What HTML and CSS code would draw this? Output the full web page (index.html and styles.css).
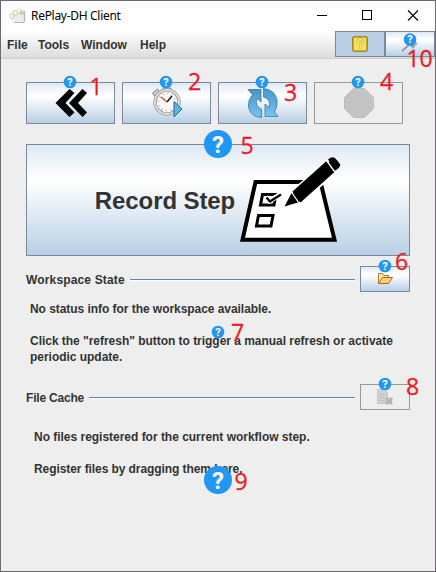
FILE: index.html
```html
<!DOCTYPE html>
<html lang="en">
<head>
<meta charset="utf-8">
<title>RePlay-DH Client</title>
<link rel="stylesheet" href="styles.css">
</head>
<body>
<div class="window">
  <header class="titlebar">
    <svg class="app-icon" width="17" height="16" viewBox="0 0 17 16"><path d="M3 14Q1 11 4 8l9-7q3-1 3 2v9q0 2-2 2z" fill="#eee"/><path d="M5 14.500h9q1.500 0 1.500-2V3" fill="none" stroke="#b5b5b5" stroke-width="1.200"/><g fill="none" stroke-width="1.100"><circle cx="3" cy="8" r="2.200" stroke="#bdd5e0"/><circle cx="6" cy="5" r="2.400" stroke="#e9cf9e"/><circle cx="10" cy="3" r="2" stroke="#e2dcae"/><path d="M11 7l1-3 3 1" stroke="#e0b4b4"/><circle cx="14" cy="5" r="1.300" stroke="#9fd0ca"/></g></svg>
    <span class="title">RePlay-DH Client</span>
    <svg class="controls" width="104" height="12" viewBox="0 0 104 12" fill="none" stroke="#000" shape-rendering="crispEdges"><path d="M0 5.500h10"/><path d="M45.500.5h9v9h-9z"/><path d="M91 .5l10 10m0-10l-10 10" shape-rendering="auto" stroke-width="1.100"/></svg>
  </header>
  <nav class="menubar">
    <span class="menu-file">File</span><span class="menu-tools">Tools</span><span class="menu-window">Window</span><span class="menu-help">Help</span>
    <div class="menu-actions">
      <button class="btn selected"><svg width="16" height="16" viewBox="0 0 16 16"><rect x=".5" y=".5" width="15" height="15" rx="1.500" fill="#c9aa2c" stroke="#a68c28"/><rect x="2" y="2" width="12" height="12" fill="#f8e05a"/><path d="M5.700 6.200Q5.700 3.700 8.200 3.700t2.300 2.200Q10.500 7.200 8.300 8.600v1.200m0 1.200v1.500" fill="none" stroke="#b9a545" stroke-width="2.500"/><path d="M5.700 6.200Q5.700 3.700 8.200 3.700t2.300 2.200Q10.500 7.200 8.300 8.600v1.200m0 1.200v1.500" fill="none" stroke="#fff1a0" stroke-width="1.200"/></svg></button>
      <button class="btn"><svg width="16" height="16" viewBox="0 0 16 16"><path d="M0 15L8 8" stroke="#9a91ad" stroke-width="1.700"/><path d="M5 6l5-4 6 6-2 1-3 4z" fill="#a8a2bd"/><path d="M9 10l3-1-1 3z" fill="#53b292"/></svg></button>
    </div>
  </nav>
  <main>
    <div class="toolbar">
      <button class="btn"><svg width="32" height="30" viewBox="54 88 32 30"><path d="M54.500 103L68.500 89l5 4-9 10 9 9.500-5 4.500zM68 103l13.500-14 4.500 4-9 10 9 9.500-4.500 4.500z"/></svg></button>
      <button class="btn"><svg width="32" height="32" viewBox="150 87 32 32"><path d="M151.500 93l5-4 2 3-5 4z" fill="#ccc" stroke="#888"/><path d="M162 88h8v3h-8z" fill="#ddd" stroke="#999"/><circle cx="166" cy="102" r="12" fill="#fbfbfb" stroke="#858585" stroke-width="3.200"/><circle cx="166" cy="102" r="12" fill="none" stroke="#ddd" stroke-width="2"/><circle cx="166" cy="102" r="8.500" fill="none" stroke="#bbb" stroke-dasharray="1.200 3.250" stroke-width="1.600"/><path d="M166 102l5-6" stroke="#111" stroke-width="1.400"/><path d="M166 102l-6-5" stroke="#e43b20" stroke-width="1.200"/><path d="M173 101.500v15.500l8-8z" fill="#62b2e2" stroke="#216b9e"/></svg></button>
      <button class="btn"><svg width="32" height="32" viewBox="246 87 32 32"><defs><linearGradient id="blue" x2="0" y2="1"><stop stop-color="#4795c8"/><stop offset="1" stop-color="#7cc2ec"/></linearGradient></defs><g fill="url(#blue)" stroke="#347ba8" stroke-width=".8"><path d="M247 89.500h13v12.500l-4-3.500q-2.500 8 4.500 10.500v8.500q-11-.5-13-10.500-.8-7 4-12.500z"/><path d="M262.500 88.500q11 1 13.500 11 1 6-2.500 12.500l3.500 4.500h-13v-12.500l4 3.500q2.500-8-5.500-10.500z"/></g></svg></button>
      <button class="btn disabled"><svg width="32" height="32" viewBox="0 0 32 32"><path d="M10.500 1.500h11l9 9v11l-9 9h-11l-9-9v-11z" fill="#c3c3c3" stroke="#bbb"/><path d="M10.500 3h11l8 8v11" fill="none" stroke="#ccc"/></svg></button>
    </div>
    <button class="btn record"><span>Record Step</span>
      <svg width="102" height="86" viewBox="240 157 102 86"><path d="M256.500 182H321.500L335.500 239.800H243.500z" fill="#fff" stroke="#000" stroke-width="4"/><path d="M263.500 194.500h13.500l-2 10.500h-13.500zM259.500 215.500h14.500l-2 10.500h-14.500z" fill="#fff" stroke="#000" stroke-width="3"/><path d="M267 197l3.500 4 11-6.500" fill="none" stroke="#fff" stroke-width="5"/><path d="M267.500 197.500l3.500 4 11-7" fill="none" stroke="#000" stroke-width="2.300"/><path d="M285.500 206.500l6.500-14 37-31.500q5-5 9-1 6 5 1 10l-39 34z" fill="#000" stroke="#fff" stroke-width="3"/><path d="M285.500 206.500l7-13.500 6 9.500zM293.500 191.500l34-30.500 8 11-34 30.500zM329 159.500q5-4 8-.5l4 5q1.500 2-4.500 6.500z"/><path d="M292.500 192l7 10.500m28-42l8 11" stroke="#fff" stroke-width="1.300"/></svg>
    </button>
    <section class="workspace">
      <div class="section-head"><h2 class="workspace-title">Workspace State</h2><i></i><button class="btn"><svg width="16" height="14" viewBox="0 0 16 14"><path d="M1.500 11V1.500h4l1 2h5v2" fill="#ffe7aa" stroke="#b67c27"/><path d="M1.500 11.500l4-6h10l-4 6z" fill="#fbd375" stroke="#a9691d"/></svg></button></div>
      <p class="status">No status info for the workspace available.</p>
      <p class="hint">Click the "refresh" button to trigger a manual refresh or activate<br>periodic update.</p>
    </section>
    <section class="cache">
      <div class="section-head"><h2 class="cache-title">File Cache</h2><i></i><button class="btn disabled"><svg width="16" height="16" viewBox="0 0 16 16"><path d="M.5.500h7l3 3v11h-10z" fill="#d2d2d2" stroke="#c8c8c8"/><path d="M2 5.500h6m-6 3h6m-6 3h6" stroke="#bfbfbf"/><path d="M8.500 8.500h2.500l1 1 1-1h2.500v2.500l-1 1 1 1v2.500h-2.500l-1-1-1 1h-2.500v-2.500l1-1-1-1z" fill="#b5b5b5"/></svg></button></div>
      <p class="files">No files registered for the current workflow step.</p>
      <p class="drag">Register files by dragging them here.</p>
    </section>
  </main>
  <svg class="annotations" width="436" height="572" viewBox="0 0 436 572">
    <g class="small-help"><circle cx="70" cy="82" r="6.300"/><circle cx="166" cy="82" r="6.300"/><circle cx="262" cy="82" r="6.300"/><circle cx="358" cy="82" r="6.300"/><circle cx="385" cy="266" r="6.300"/><circle cx="218" cy="332" r="6.300"/><circle cx="385" cy="384" r="6.300"/><circle cx="410" cy="39.500" r="6.300"/></g>
    <g class="small-mark"><text x="70" y="85.800">?</text><text x="166" y="85.800">?</text><text x="262" y="85.800">?</text><text x="358" y="85.800">?</text><text x="385" y="269.800">?</text><text x="218" y="335.800">?</text><text x="385" y="387.800">?</text><text x="410" y="43.300">?</text></g>
    <circle class="large-help" cx="218" cy="144" r="14"/><text class="large-mark" x="218" y="152.500">?</text>
    <circle class="large-help" cx="218" cy="480" r="14"/><text class="large-mark" x="218" y="488.500">?</text>
    <g class="numbers"><text x="89.500" y="95">1</text><text x="188" y="90">2</text><text x="284" y="101">3</text><text x="380" y="90">4</text><text x="240.500" y="154">5</text><text x="395" y="270">6</text><text x="231" y="341">7</text><text x="406" y="395">8</text><text x="234.500" y="490">9</text><text x="406.500" y="67">10</text></g>
  </svg>
</div>
</body>
</html>
```
FILE: styles.css
```css
* { box-sizing: border-box; }
body { margin: 0; overflow: hidden; }
.window { position: relative; width: 436px; height: 572px; border: 1px solid #6c6a6c; background: #eee; font: bold 12px/16px "Liberation Sans", Arial, sans-serif; color: #333; }
.titlebar { height: 30px; background: #fff; display: flex; align-items: center; padding-left: 8px; }
.title { font: 12px/16px "Noto Sans", "Open Sans", sans-serif; color: #000; margin-left: 5px; letter-spacing: -.3px; white-space: nowrap; }
.controls { margin-left: auto; margin-right: 14px; }
.menubar { height: 28px; display: flex; align-items: center; padding-left: 6px; background: linear-gradient(#fff, #dcdcdc); border-bottom: 1px solid #ccc; }
.menubar span { white-space: nowrap; }
.menu-file { width: 31px; }
.menu-tools { width: 43px; }
.menu-window { width: 59px; }
.menu-actions { display: flex; margin-left: auto; align-self: flex-start; }
.menu-actions .btn { width: 50px; height: 26px; }
.btn { display: flex; align-items: center; justify-content: center; padding: 0; border: 1px solid #7a8a99; border-radius: 0; background: linear-gradient(#dde8f3, #fff 30%, #fff 33%, #b8cfe5); font: inherit; color: #333; }
.btn svg { flex: none; }
.btn.selected { background: #b8cfe5; }
.btn.disabled { background: #eee; border-color: #999; }
main { padding: 23px 25px 0; }
.toolbar { display: flex; gap: 7px; }
.toolbar .btn { width: 89px; height: 42px; }
.record { width: 384px; height: 112px; margin-top: 20px; font-size: 24px; gap: 4px; letter-spacing: -.1px; }
.record span { white-space: nowrap; padding-top: 2px; }
.workspace { margin-top: 10px; }
.section-head { display: flex; align-items: center; height: 26px; }
.section-head h2 { font: inherit; margin: 0; padding-top: 2px; white-space: nowrap; }
.section-head .workspace-title { width: 99px; letter-spacing: .15px; }
.section-head .cache-title { width: 58px; letter-spacing: -.2px; }
.section-head i { flex: 1; height: 2px; margin: 1px 5px 0; border-top: 1px solid #6382bf; border-bottom: 1px solid #fff; }
.section-head .btn { width: 50px; height: 26px; }
p { margin: 0; white-space: nowrap; }
.status { padding: 9px 0 0 4px; letter-spacing: -.05px; }
.hint { padding: 16px 0 0 4px; letter-spacing: -.03px; }
.cache { margin-top: 19px; }
.files { padding: 19px 0 0 8px; letter-spacing: -.02px; }
.drag { padding: 16px 0 0 8px; letter-spacing: -.08px; }
.annotations { position: absolute; left: -1px; top: -1px; pointer-events: none; }
.small-help, .large-help { fill: #2196f3; }
.small-mark, .large-mark { fill: #fff; font-family: Roboto, sans-serif; font-weight: bold; text-anchor: middle; }
.small-mark { font-size: 11px; }
.large-mark { font-size: 24px; }
.numbers { fill: #ed1c24; stroke: #ed1c24; stroke-width: .3px; font: 23px "Open Sans", sans-serif; letter-spacing: -.1px; }
```
